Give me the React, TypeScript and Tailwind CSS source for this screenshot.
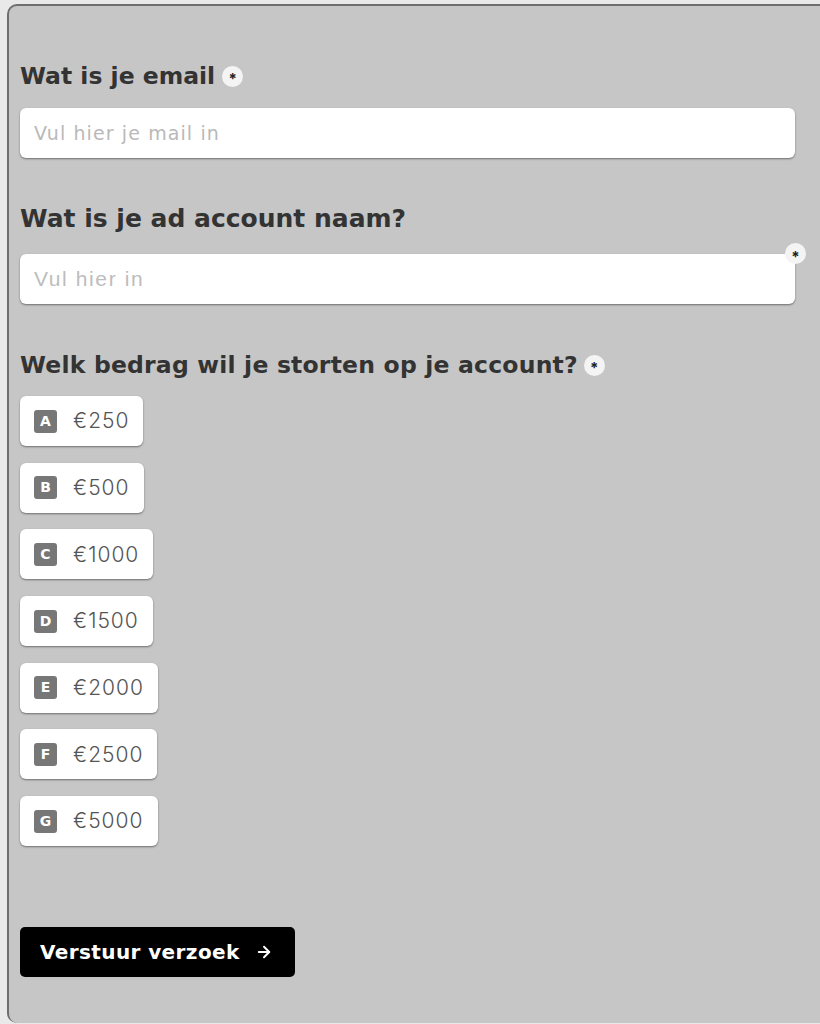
import { ArrowRight } from 'lucide-react'

const amounts = [
  { key: 'A', label: '€250' },
  { key: 'B', label: '€500' },
  { key: 'C', label: '€1000' },
  { key: 'D', label: '€1500' },
  { key: 'E', label: '€2000' },
  { key: 'F', label: '€2500' },
  { key: 'G', label: '€5000' },
]

function Required({ className = '' }: { className?: string }) {
  return (
    <span
      className={
        'inline-flex w-[21px] h-[21px] rounded-full bg-[#f4f4f4] items-center justify-center text-[#222] text-[15px] leading-none font-bold font-[Inter,sans-serif] ' +
        className
      }
    >
      <span className="mt-[5px]">*</span>
    </span>
  )
}

export default function App() {
  return (
    <div className="min-h-screen bg-[#e9e9e9] pl-[7px] pt-[4px] overflow-hidden font-['DejaVu_Sans',sans-serif]">
      <div className="bg-[#c6c6c6] border-l-2 border-t-2 border-[#6e6e6e] rounded-tl-[10px] rounded-bl-[10px] h-[1019px] pl-[11px] pr-[25px] pt-[55px]">
        {/* Email */}
        <label className="flex items-center gap-[7px] text-[23.5px] leading-[30px] font-bold text-[#333]">
          Wat is je email
          <Required />
        </label>
        <div className="mt-[17px] h-[50px] bg-white rounded-[6px] shadow-[0_1px_2px_rgba(0,0,0,0.45)] flex items-center px-[14px]">
          <span className="text-[19px] text-[#b9b9b9] tracking-[1.1px]">Vul hier je mail in</span>
        </div>

        {/* Ad account */}
        <h3 className="mt-[44px] text-[25px] leading-[34px] font-bold text-[#333]">
          Wat is je ad account naam?
        </h3>
        <div className="relative mt-[18px] h-[50px] bg-white rounded-[6px] shadow-[0_1px_2px_rgba(0,0,0,0.45)] flex items-center px-[14px]">
          <span className="text-[21px] text-[#bdbdbd] font-['Liberation_Sans',sans-serif] tracking-[1.6px]">
            Vul hier in
          </span>
          <Required className="absolute -top-[11px] -right-[11px]" />
        </div>

        {/* Amount */}
        <label className="mt-[46px] flex items-center gap-[6px] text-[23.5px] leading-[30px] font-bold text-[#333] tracking-[0.2px]">
          Welk bedrag wil je storten op je account?
          <Required />
        </label>
        <div className="mt-[16px] flex flex-col items-start gap-[16.7px]">
          {amounts.map((a) => (
            <div
              key={a.key}
              className="h-[50px] bg-white rounded-[6px] shadow-[0_1px_2px_rgba(0,0,0,0.45)] flex items-center pl-[14px] pr-[14px] gap-[16px]"
            >
              <span className="w-[23px] h-[23px] rounded-[3px] bg-[#777] text-white text-[14px] font-bold flex items-center justify-center">
                {a.key}
              </span>
              <span className="text-[21px] text-[#555] font-light font-[Inter,sans-serif] tracking-[1px]">{a.label}</span>
            </div>
          ))}
        </div>

        <button className="mt-[81px] h-[50px] w-[275px] bg-black rounded-[5px] flex items-center pl-[20px] gap-[15px] text-white text-[20px] font-bold tracking-[0.4px]">
          Verstuur verzoek
          <ArrowRight className="w-[18px] h-[18px]" strokeWidth={2.5} />
        </button>
      </div>
    </div>
  )
}
